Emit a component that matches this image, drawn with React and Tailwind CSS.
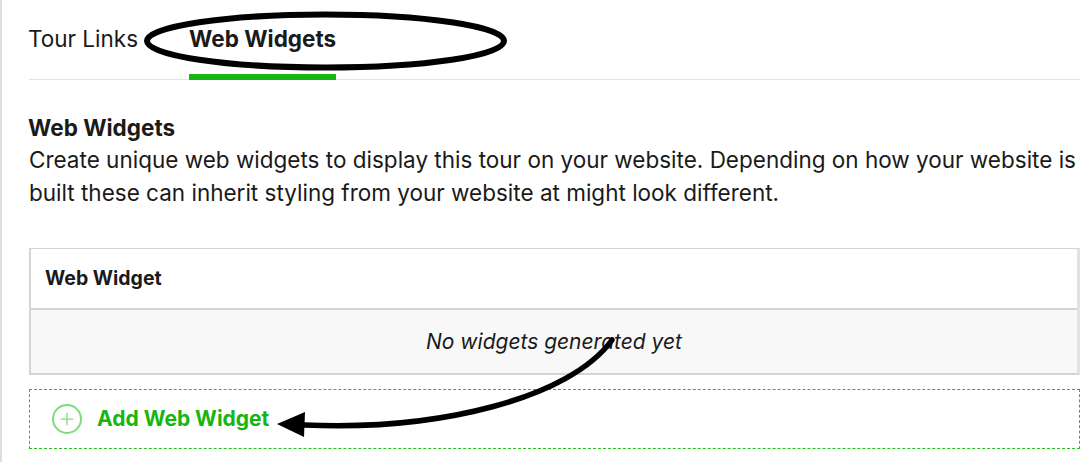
import { Plus } from "lucide-react";

function Annotations() {
  return (
    <svg className="absolute left-0 top-0 pointer-events-none" width="1089" height="463" viewBox="0 0 1089 463" fill="none">
      <ellipse cx="325.500" cy="41" rx="178.500" ry="26.500" stroke="#000" strokeWidth="6" />
      <path d="M612 340 C 570 398, 440 431, 304 425" stroke="#000" strokeWidth="5.500" strokeLinecap="round" />
      <path d="M277 424 L305 412 L304 437 Z" fill="#000" />
    </svg>
  );
}

export default function App() {
  return (
    <div className="relative w-[1089px] h-[463px] overflow-hidden bg-white font-['Inter',sans-serif] text-[#1a1a1a]">
      <div className="h-[462px] w-[1080px] border-l-2 border-[#dedede] pl-[27px] flex flex-col">
        <div className="flex h-[80px] gap-[51px] border-b border-[#e2e2e2]">
          <div className="pt-[25px] -ml-px text-[22.500px] leading-[28px]">Tour Links</div>
          <div className="pt-[25px] text-[22.500px] leading-[28px] font-bold border-b-[6px] border-[#17b50f] h-[80px]">Web Widgets</div>
        </div>
        <h2 className="mt-[34px] -ml-px text-[22.500px] leading-[28px] font-bold">Web Widgets</h2>
        <p className="text-[22.500px] leading-[33px] mt-[1px] whitespace-nowrap">
          Create unique web widgets to display this tour on your website. Depending on how your website is
          <br />
          built these can inherit styling from your website at might look different.
        </p>
        <div className="mt-[39px] border-2 border-[#d4d4d4] border-t border-r-[3px] border-r-[#e2e2e2]">
          <div className="h-[61px] flex items-center pl-[14px] text-[19.500px] font-bold border-b-2 border-[#d4d4d4]">Web Widget</div>
          <div className="h-[63px] bg-[#f8f8f8] flex items-center justify-center text-[21px] italic">No widgets generated yet</div>
        </div>
        <div className="mt-[14px] h-[60px] border border-dashed border-[#22c21a] flex items-center pl-[22px] gap-[15px]">
          <div className="w-[30px] h-[30px] rounded-full border-2 border-[#7fdc7a] flex items-center justify-center text-[#7fdc7a]">
            <Plus size={20} strokeWidth={1.5} />
          </div>
          <span className="text-[21px] font-bold text-[#17b50f]">Add Web Widget</span>
        </div>
      </div>
      <Annotations />
    </div>
  );
}
